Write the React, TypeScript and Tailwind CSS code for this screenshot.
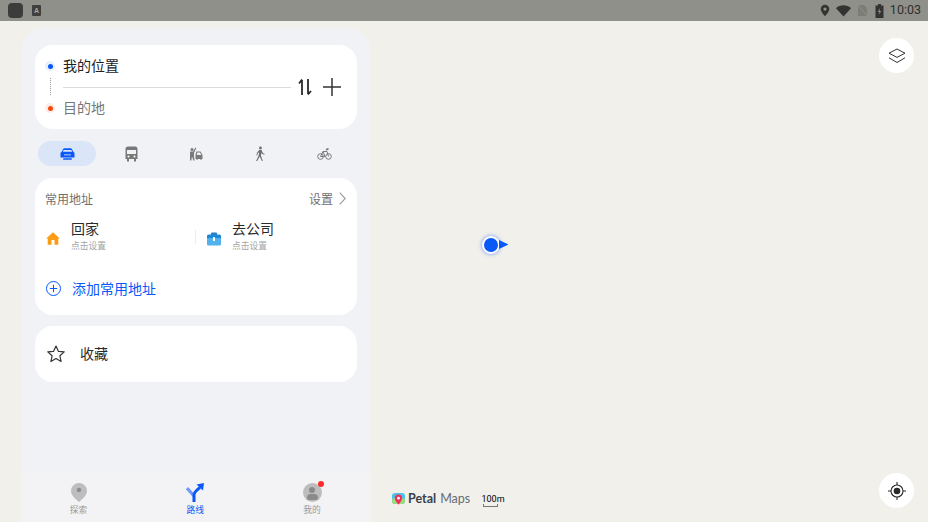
import React from "react";

const cjk = { fontFamily: '"Noto Sans CJK SC", "Noto Sans", sans-serif' };

function StatusBar() {
  return (
    <div className="h-[21px] bg-[#90908a] flex items-center justify-between pl-[8px] pr-[7px] shrink-0">
      <div className="flex items-center gap-[9px]">
        <div className="w-[15px] h-[15px] rounded-[4px] bg-[#3c3c3a]" />
        <div className="w-[9px] h-[11px] bg-[#3f3f3d] rounded-[1px] flex items-center justify-center text-[7px] font-bold text-[#a8a8a4] leading-none" style={{ fontFamily: '"Liberation Sans", sans-serif' }}>A</div>
      </div>
      <div className="flex items-center text-[#2f2f2d]">
        <svg width="10" height="13" viewBox="0 0 10 13"><path fillRule="evenodd" d="M5 .8a4.300 4.300 0 0 0-4.300 4.300C.7 8 5 12.400 5 12.400S9.300 8 9.300 5.100A4.300 4.300 0 0 0 5 .8Zm0 2.700a1.600 1.600 0 1 1 0 3.200 1.600 1.600 0 0 1 0-3.200Z" fill="#333331" /></svg>
        <svg className="ml-[6px]" width="15" height="12" viewBox="0 0 15 12"><path d="M0 3.200C4-.6 11-.6 15 3.200L7.500 11.500Z" fill="#333331" /></svg>
        <svg className="ml-[6px]" width="11" height="13" viewBox="0 0 11 13"><path d="M1 1h6l3 3v8H1Z" fill="#7d7d78" /><path d="M0 0l11 13" stroke="#90908a" strokeWidth="1" /></svg>
        <svg className="ml-[7px]" width="9" height="14" viewBox="0 0 9 14"><path d="M3 0h3v1.500h2.500V14H.5V1.500H3Z" fill="#333331" /><path d="M5 4 2.800 8h1.600L3.800 11 6.200 7H4.600Z" fill="#90908a" /></svg>
        <span className="ml-[6px] text-[12.500px] text-[#2f2f2d] leading-none" style={{ fontFamily: 'Roboto, sans-serif' }}>10:03</span>
      </div>
    </div>
  );
}

function Dot({ color, halo }: { color: string; halo: string }) {
  return (
    <div className="w-[10px] h-[10px] rounded-full flex items-center justify-center" style={{ backgroundColor: halo }}>
      <div className="w-[5px] h-[5px] rounded-full" style={{ backgroundColor: color }} />
    </div>
  );
}

function RouteCard() {
  return (
    <div className="h-[84px] bg-white rounded-[18px] flex pl-[10px] pr-[15px]">
      <div className="w-[10px] flex flex-col items-center pt-[16px]">
        <Dot color="#0a59f7" halo="#e8effe" />
        <div className="w-0 h-[17px] mt-[7px] border-l border-dotted border-[#9a9a9a]" />
        <div className="mt-[8px]"><Dot color="#f5480f" halo="#fdece6" /></div>
      </div>
      <div className="w-[228px] ml-[8px] flex flex-col" style={cjk}>
        <div className="h-[42px] flex items-center text-[14px] text-[#222] leading-none pb-[3px]">我的位置</div>
        <div className="h-px bg-[#dcdcdc]" />
        <div className="flex-1 flex items-center text-[14px] text-[#777] leading-none pb-[3px]">目的地</div>
      </div>
      <div className="flex items-center ml-[7px]">
        <svg width="14" height="18" viewBox="0 0 14 18" fill="none" stroke="#2a2a2a" strokeWidth="1.800">
          <path d="M4 17V2M4 1.500 1 5.500" />
          <path d="M10 1v15M10 16.500l3-3.500" />
        </svg>
        <svg className="ml-[11px]" width="18" height="18" viewBox="0 0 18 18" stroke="#333" strokeWidth="1.500"><path d="M9 0v18M0 9h18" /></svg>
      </div>
    </div>
  );
}

function Cell({ children }: { children: React.ReactNode }) {
  return <div className="w-[64.500px] flex items-center justify-center">{children}</div>;
}

function TransportTabs() {
  return (
    <div className="h-[25px] mt-[12px] flex items-center pl-[3px]">
      <div className="w-[58px] h-[25px] rounded-full bg-[#dbe5f8] flex items-center justify-center mr-[3px]">
        <svg width="15" height="12" viewBox="0 0 15 12"><path fillRule="evenodd" d="M3 1.200C3.400.5 4 .2 5 .2h5c1 0 1.600.3 2 1l1.400 2.800 1.100.8v4.600H.5V4.800L1.600 4ZM3.600 2l-.8 1.800h9.400L11.400 2Z" fill="#0a59f7" /><rect x="3" y="10.200" width="9" height="1.500" rx=".7" fill="#0a59f7" /><rect x="4" y="6" width="7" height="1.500" fill="#7ea6f7" /></svg>
      </div>
      <Cell>
        <svg width="13" height="16" viewBox="0 0 13 16"><path fillRule="evenodd" d="M3 .5h7A2.500 2.500 0 0 1 12.500 3v10H.5V3A2.500 2.500 0 0 1 3 .5ZM2 4v4h9V4Z" fill="#787878" /><rect x="2" y="13" width="2" height="2.500" fill="#787878" /><rect x="9" y="13" width="2" height="2.500" fill="#787878" /><circle cx="3.500" cy="10.500" r="1" fill="#fff" /><circle cx="9.500" cy="10.500" r="1" fill="#fff" /></svg>
      </Cell>
      <Cell>
        <svg width="14" height="15" viewBox="0 0 14 15" fill="#7a7a7a"><circle cx="3" cy="3.500" r="1.500" /><path d="M1 5.500h3l2.500-4 .8.500L5 7v3l.5 4.500H4.300L3 10.500 2.300 14.500H1Z" /><path fillRule="evenodd" d="M7.500 5.500h4l2 3.500V13H12.500v1h-1v-1H8.500v1h-1v-1H6.500V8.500Zm.8 1L7.700 9h4.600l-1.300-2.500Z" /></svg>
      </Cell>
      <Cell>
        <svg width="12" height="15" viewBox="0 0 12 16" fill="#6e6e6e"><circle cx="6.500" cy="2" r="1.500" /><path d="M5.500 4h2l1.500 3.500 2 1-.5.800-2.500-1L7.500 7 7 10.500l2 5.500H8L5.700 11.300 3 16H1.800l2.800-6L5 6.500 3.500 8 3 10H2.200l.5-2.700Z" /></svg>
      </Cell>
      <Cell>
        <svg width="15" height="13" viewBox="0 0 15 13" fill="none" stroke="#7a7a7a" strokeWidth="1"><circle cx="3.500" cy="9.500" r="2.800" /><circle cx="11.500" cy="9.500" r="2.800" /><path d="M3.500 9.500 6 4.500h4l1.500 5M6 4.500 8 9.500h-4.500" /><path d="M9 3 11.500 1.500" strokeWidth="1.500" /></svg>
      </Cell>
    </div>
  );
}

function PlaceItem({ icon, title }: { icon: React.ReactNode; title: string }) {
  return (
    <div className="flex items-center">
      <div className="w-[16px] flex justify-center mt-[7px]">{icon}</div>
      <div className="ml-[10px]" style={cjk}>
        <div className="text-[14px] leading-[16px] text-[#2a2a2a]">{title}</div>
        <div className="text-[8.750px] leading-[10px] mt-[5px] text-[#a5a5a5]">点击设置</div>
      </div>
    </div>
  );
}

function CommonCard() {
  return (
    <div className="h-[137px] mt-[12px] bg-white rounded-[18px] pl-[10px] pr-[11px]" style={cjk}>
      <div className="h-[41px] flex items-center justify-between">
        <span className="text-[12px] text-[#707070] leading-none">常用地址</span>
        <div className="flex items-center">
          <span className="text-[12px] text-[#707070] leading-none">设置</span>
          <svg className="ml-[6px]" width="7" height="13" viewBox="0 0 7 13" fill="none" stroke="#9a9a9a" strokeWidth="1.100"><path d="M.7.7 6.200 6.500.7 12.300" /></svg>
        </div>
      </div>
      <div className="h-[32px] flex items-center">
        <div className="w-[150px]">
          <PlaceItem
            title="回家"
            icon={<svg width="14" height="13" viewBox="0 0 14 13"><path fillRule="evenodd" d="M7 .2 13.800 6.500 12.300 6.500V12.800H1.700V6.500H.2ZM5.700 8v4.800h2.600V8Z" fill="#fb9c16" /><rect x="5.700" y="8" width="2.600" height="4.800" fill="#fff" /></svg>}
          />
        </div>
        <div className="w-px h-[14px] mt-[4px] bg-[#ececec]" />
        <div className="ml-[10px]">
          <PlaceItem
            title="去公司"
            icon={<svg width="14" height="14" viewBox="0 0 14 14"><path d="M5 .5h4a1 1 0 0 1 1 1V3H4V1.500a1 1 0 0 1 1-1Z" fill="#2a7fc2" /><rect y="2.500" width="14" height="5" rx="1.500" fill="#1e88d8" /><rect y="6" width="14" height="7.500" rx="1.500" fill="#52b2ec" /><rect x="6" y="5" width="2" height="4" rx=".6" fill="#fff" /></svg>}
          />
        </div>
      </div>
      <div className="flex items-center mt-[28px] ml-[1px]">
        <svg className="mt-[2px]" width="15" height="15" viewBox="0 0 15 15" fill="none" stroke="#0a59f7" strokeWidth="1"><circle cx="7.500" cy="7.500" r="7" /><path d="M7.500 3.800v7.400M3.800 7.500h7.400" /></svg>
        <span className="ml-[11px] text-[14px] text-[#0a59f7] leading-none">添加常用地址</span>
      </div>
    </div>
  );
}

function FavCard() {
  return (
    <div className="h-[56px] mt-[11px] bg-white rounded-[18px] flex items-center pl-[12px]" style={cjk}>
      <svg width="18" height="18" viewBox="0 0 18 18" fill="none" stroke="#333" strokeWidth="1.200" strokeLinejoin="round"><path d="M9 1l2.400 5.300 5.800.6-4.300 3.900 1.200 5.700L9 13.600l-5.100 2.900 1.200-5.700L.8 6.900l5.800-.6Z" /></svg>
      <span className="ml-[15px] text-[14px] text-[#2a2a2a] leading-none pb-[2px]">收藏</span>
    </div>
  );
}

function NavItem({ icon, label, active }: { icon: React.ReactNode; label: string; active?: boolean }) {
  return (
    <div className="w-[100px] flex flex-col items-center" style={cjk}>
      <div className="h-[20px] flex items-end">{icon}</div>
      <div className={`text-[8.750px] leading-[10px] mt-[3px] ${active ? "text-[#0a59f7]" : "text-[#9a9a9a]"}`}>{label}</div>
    </div>
  );
}

function BottomNav() {
  return (
    <div className="h-[50px] bg-[#f3f3f5] flex justify-between pt-[10px] pl-[6.500px] pr-[8px] shrink-0">
      <NavItem
        label="探索"
        icon={<svg width="16" height="19" viewBox="0 0 16 19"><path d="M8 0a8 8 0 0 0-8 8c0 4.500 5 8.500 8 11 3-2.500 8-6.500 8-11a8 8 0 0 0-8-8Z" fill="#bdbdbd" /><circle cx="8" cy="7" r="2.200" fill="#8c8c8c" /></svg>}
      />
      <NavItem
        active
        label="路线"
        icon={<svg width="18" height="19" viewBox="0 0 18 19"><path d="M1 5 8 13" stroke="#6d9bf8" strokeWidth="3.200" fill="none" /><path d="M8 19v-7c0-3 3-5 6-7.500" stroke="#0a59f7" strokeWidth="3" fill="none" /><path d="M10.500 1.500 18 0l-1 7.500Z" fill="#0a59f7" /></svg>}
      />
      <NavItem
        label="我的"
        icon={
          <div className="relative w-[19px] h-[19px] rounded-full bg-[#bdbdbd] overflow-visible flex flex-col items-center justify-end">
            <div className="w-[6px] h-[6px] rounded-full bg-[#8a8a8a] mb-[1px]" />
            <div className="w-[11px] h-[6px] rounded-t-[5px] rounded-b-[3px] bg-[#8a8a8a] mb-[2px]" />
            <div className="absolute -top-[2px] -right-[2px] w-[6px] h-[6px] rounded-full bg-[#fa2a2d]" />
          </div>
        }
      />
    </div>
  );
}

function Panel() {
  return (
    <div className="w-[348px] h-[494px] ml-[22px] mt-[7px] bg-[#f1f2f6] rounded-t-[22px] overflow-hidden flex flex-col">
      <div className="flex-1 pt-[17px] px-[13px]">
        <RouteCard />
        <TransportTabs />
        <CommonCard />
        <FavCard />
      </div>
      <BottomNav />
    </div>
  );
}

export default function App() {
  return (
    <div className="w-[928px] h-[522px] bg-[#f1f0eb] flex flex-col overflow-hidden relative">
      <StatusBar />
      <Panel />

      <div className="absolute left-[879px] top-[38px] w-[35px] h-[35px] rounded-full bg-white flex items-center justify-center">
        <svg width="18" height="16" viewBox="0 0 18 16" fill="none" stroke="#333" strokeWidth="1" strokeLinejoin="round"><path d="M9 1l8 4.200-8 4.200-8-4.200Z" /><path d="M1 9.800l8 4.700 8-4.700" /></svg>
      </div>

      <div className="absolute left-[879px] top-[473px] w-[35px] h-[35px] rounded-full bg-white flex items-center justify-center">
        <svg width="18" height="18" viewBox="0 0 18 18" fill="none" stroke="#2a2a2a" strokeWidth="1.100"><circle cx="9" cy="9" r="6" /><circle cx="9" cy="9" r="3.300" fill="#2a2a2a" stroke="none" /><path d="M9 0v3M9 15v3M0 9h3M15 9h3" /></svg>
      </div>

      <div className="absolute left-[482px] top-[235.500px] flex items-center">
        <div className="w-[18px] h-[18px] rounded-full bg-[#0a59f7] border-[2px] border-white shadow-[0_0_4px_rgba(10,89,247,0.6)]" />
        <svg className="-ml-[1px]" width="10" height="9" viewBox="0 0 10 9"><path d="M0 0 9.500 4.500 0 9Z" fill="#0a59f7" /></svg>
      </div>

      <div className="absolute left-[392px] top-[492px] flex items-center h-[15px]">
        <svg width="13" height="14" viewBox="0 0 13 14"><rect width="13" height="11" rx="3" fill="#4cc3e8" /><rect y="5" width="13" height="6" rx="3" fill="#9bdc7c" /><path d="M6.500 1.500a3.700 3.700 0 0 0-3.700 3.700c0 2.500 3.700 6.300 3.700 6.300s3.700-3.800 3.700-6.300a3.700 3.700 0 0 0-3.700-3.700Z" fill="#f0305a" /><circle cx="6.500" cy="5.200" r="1.400" fill="#fff" /></svg>
        <span className="ml-[3px] text-[12.500px] font-bold text-[#39404a] leading-none" style={{ fontFamily: 'Lato, sans-serif' }}>Petal</span>
        <span className="ml-[4px] text-[12.500px] text-[#666c75] leading-none" style={{ fontFamily: 'Lato, sans-serif' }}>Maps</span>
      </div>

      <div className="absolute left-[482px] top-[494px] flex flex-col items-center w-[22px]">
        <span className="text-[9px] text-black leading-[10px]" style={{ fontFamily: 'Roboto, sans-serif' }}>100m</span>
        <div className="w-[15px] h-[3px] border-x border-b border-[#777] -ml-[5px]" />
      </div>
    </div>
  );
}
